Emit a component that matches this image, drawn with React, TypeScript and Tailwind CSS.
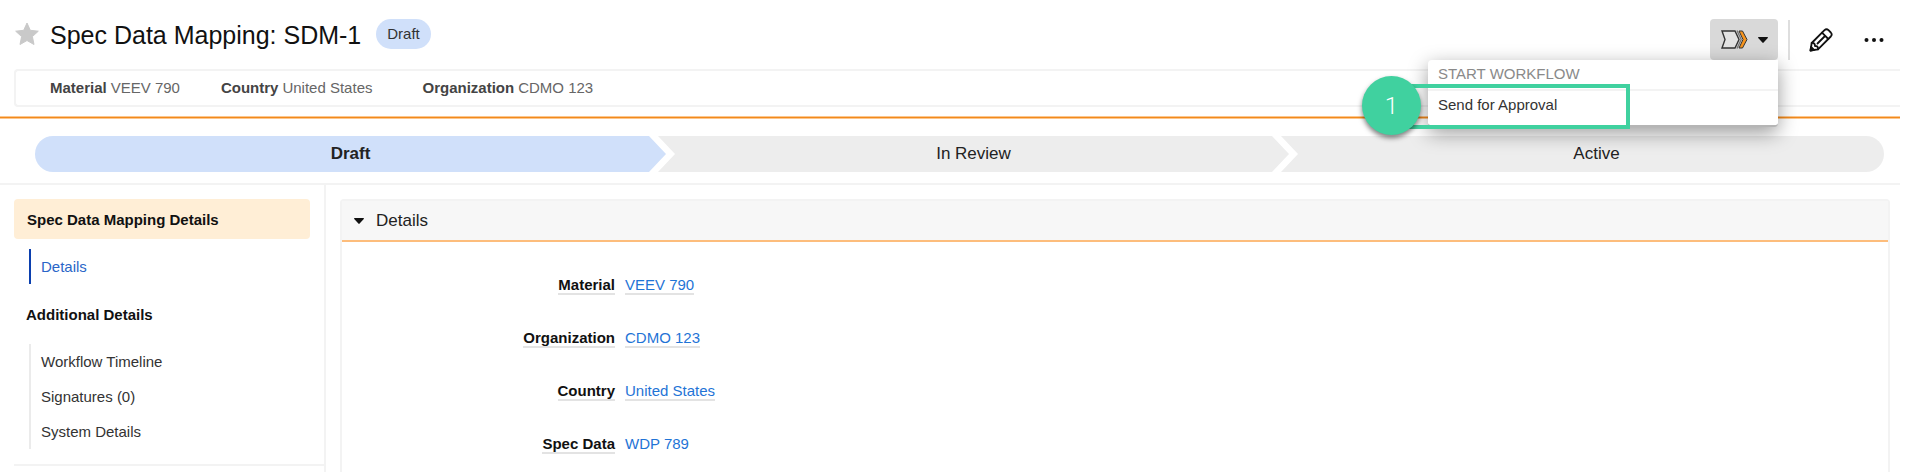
import React, { useState } from "react";
import { clsx } from "clsx";

const summary = [
  { label: "Material", value: "VEEV 790", className: "mr-[41px]" },
  { label: "Country", value: "United States", className: "mr-[50px]" },
  { label: "Organization", value: "CDMO 123", className: "" },
];

const stages = ["Draft", "In Review", "Active"];

const fields = [
  { label: "Material", value: "VEEV 790", underlined: true },
  { label: "Organization", value: "CDMO 123", underlined: true },
  { label: "Country", value: "United States", underlined: true },
  { label: "Spec Data", value: "WDP 789", underlined: false },
];

const additional = ["Workflow Timeline", "Signatures (0)", "System Details"];

const Caret = () => (
  <svg width="10" height="6" viewBox="0 0 10 6" fill="#111" aria-hidden="true">
    <path d="M0.6 0h8.8c.5 0 .7.5.4.9L5.6 5.6c-.3.4-.9.4-1.2 0L.2.9C-.1.5.1 0 .6 0z" />
  </svg>
);

const StarIcon = () => (
  <svg width="24" height="24" viewBox="0 0 24 24" fill="#c9c9c9" stroke="#c9c9c9" strokeWidth="1" strokeLinejoin="round" aria-hidden="true">
    <path d="M12 1l3.3 7.3 8 .9-5.9 5.4 1.6 7.9-7-4-7 4 1.6-7.9L.7 9.2l8-.9z" />
  </svg>
);

const WorkflowIcon = () => (
  <svg width="27" height="19" viewBox="0 0 27 19" fill="none" stroke="#333" strokeWidth="1.4" aria-hidden="true">
    <path d="M1 1h13l4 8.5-4 8.5H1l3-8.5z" fill="#e2e2e2" />
    <path d="M16 .5l4.200 9L16 18.500" stroke="#777" />
    <path d="M18 1h3.500l4.500 8.500-4.500 8.500H18l4-8.500z" fill="#f7941d" strokeWidth="1" />
  </svg>
);

const PencilIcon = () => (
  <svg width="24" height="24" viewBox="0 0 24 24" fill="none" stroke="#111" strokeWidth="1.8" strokeLinejoin="round" strokeLinecap="round" aria-hidden="true">
    <path d="M1.500 22.500l1.200-7.500L15.500 2.200q2-1.800 4 0l2.300 2.300q1.800 2 0 4L9 21.300z" />
    <path d="M2.700 15q3.300-.5 3.300 3 3.300-.2 3 3.300M13 4.700l6.300 6.300M8.500 15.500l7-7" />
    <path d="M1.500 22.500l.6-3.500 2.900 2.900z" fill="#111" />
  </svg>
);

const WorkflowMenu = () => (
  <div className="absolute top-full right-0 z-10 w-[350px] rounded-b rounded-tl border-b-2 border-[#b5b5b5] bg-white shadow-[0_6px_20px_rgba(0,0,0,0.4)]">
    <p className="border-b-2 border-[#f3f3f3] px-2.5 pt-[5px] pb-1.5 text-[15px] leading-[18px] text-[#8a8a8a]">START WORKFLOW</p>
    <button type="button" className="block w-full px-2.5 pt-[5px] pb-[11px] text-left text-[15px] leading-[18px] text-[#333]">
      Send for Approval
    </button>
    {/* step marker around the menu item */}
    <div className="pointer-events-none absolute top-6 -left-6 h-[45px] w-[226px] border-4 border-[#40d19f]" />
    <div className="absolute top-4 -left-[66px] flex size-[59px] items-center justify-center rounded-full bg-[#40d19f] font-[Roboto,sans-serif] text-2xl font-light text-white shadow-[0_3px_5px_rgba(0,0,0,0.5)]">
      1
    </div>
  </div>
);

const Header = () => {
  const [menuOpen, setMenuOpen] = useState(true);

  return (
    <header>
      <div className="flex h-[69px] items-start justify-between pt-[19px] pl-[15px]">
        <div className="flex h-[30px] items-center">
          <button type="button" aria-label="Favorite">
            <StarIcon />
          </button>
          <h1 className="ml-[11px] pt-0.5 text-[25px] leading-[30px] text-[#111]">Spec Data Mapping: SDM-1</h1>
          <span className="ml-[15px] rounded-full bg-[#d0e0fa] px-[11px] text-[15px] leading-[30px] text-[#333]">Draft</span>
        </div>
        <div className="flex h-[41px] items-center">
          <div className="relative">
            <button
              type="button"
              aria-label="Workflow actions"
              aria-expanded={menuOpen}
              onClick={() => setMenuOpen(!menuOpen)}
              className="flex h-[41px] w-[68px] items-center justify-center gap-2.5 rounded bg-[#d9d9d9]"
            >
              <WorkflowIcon />
              <Caret />
            </button>
            {menuOpen && <WorkflowMenu />}
          </div>
          <div className="ml-2.5 h-10 w-0.5 bg-[#dedede]" />
          <button type="button" aria-label="Edit" className="ml-[19px]">
            <PencilIcon />
          </button>
          <button type="button" aria-label="More actions" className="mr-4 ml-[31px]">
            <svg width="20" height="6" viewBox="0 0 20 6" fill="#111" aria-hidden="true">
              <circle cx="2.500" cy="3" r="2" />
              <circle cx="10" cy="3" r="2" />
              <circle cx="17.500" cy="3" r="2" />
            </svg>
          </button>
        </div>
      </div>
      <dl className="ml-3.5 flex rounded-l border-2 border-r-0 border-[#f3f3f3] py-2 pl-[34px] text-[15px] leading-[18px]">
        {summary.map((s) => (
          <div key={s.label} className={clsx("flex gap-1", s.className)}>
            <dt className="font-bold text-[#444]">{s.label}</dt>
            <dd className="text-[#666]">{s.value}</dd>
          </div>
        ))}
      </dl>
      <div className="mt-[9px] h-[3px] border-y border-[#fcc68d] bg-[#f28a1c]" />
    </header>
  );
};

const Lifecycle = () => (
  <div className="border-b-2 border-[#f3f3f3] pt-[17px] pr-4 pb-[11px] pl-[35px]">
    <div className="overflow-hidden rounded-full">
      <ol className="-mr-5 flex">
        {stages.map((stage, i) => (
          <li
            key={stage}
            className={clsx(
              "-mr-2 h-9 flex-1 text-center text-[17px] leading-9 text-[#222]",
              i === 0
                ? "bg-[#d0e0fa] font-bold [clip-path:polygon(0_0,calc(100%-17px)_0,100%_50%,calc(100%-17px)_100%,0_100%)]"
                : "bg-[#ededed] [clip-path:polygon(0_0,calc(100%-17px)_0,100%_50%,calc(100%-17px)_100%,0_100%,17px_50%)]"
            )}
          >
            {stage}
          </li>
        ))}
      </ol>
    </div>
  </div>
);

const Sidebar = () => (
  <nav className="w-[326px] shrink-0 border-r-2 border-[#f3f3f3] pt-3.5 pl-3.5 text-[15px]">
    <h2 className="mr-3.5 rounded-sm bg-[#ffeed6] pt-0.5 pl-[13px] leading-[38px] font-bold text-[#111]">Spec Data Mapping Details</h2>
    <ul className="mt-2.5 ml-[15px] border-l-2 border-[#0b3fae]">
      <li>
        <a href="#details" className="block pl-2.5 leading-[35px] text-[#2a66c8]">Details</a>
      </li>
    </ul>
    <h2 className="mt-2.5 pt-0.5 pl-3 leading-[38px] font-bold text-[#111]">Additional Details</h2>
    <ul className="mt-2.5 ml-[15px] border-l-2 border-[#ebebeb]">
      {additional.map((item) => (
        <li key={item}>
          <a href="#" className="block pl-2.5 leading-[35px] text-[#333]">{item}</a>
        </li>
      ))}
    </ul>
    <div className="mt-[15px] h-0.5 bg-[#f3f3f3]" />
  </nav>
);

const DetailsPanel = () => (
  <main className="min-w-0 flex-1 pt-3.5 pr-2.5 pl-3.5">
    <section id="details" className="h-full rounded-t border-2 border-b-0 border-[#f3f3f3]">
      <h2 className="border-b-2 border-[#fdbd7c] bg-[#f7f7f7]">
        <button type="button" className="flex w-full items-center gap-3 pl-3 text-[17px] leading-[39px] text-[#222]">
          <Caret />
          Details
        </button>
      </h2>
      <dl className="pt-[17px] text-[15px] leading-4">
        {fields.map((f) => (
          <div key={f.label} className="flex h-[53px] items-center gap-2.5">
            <dt className="w-[273px] text-right font-bold text-[#111]">
              <span className="inline-block border-b-2 border-[#e3e3e3]">{f.label}</span>
            </dt>
            <dd>
              <a
                href="#"
                className={clsx("inline-block border-b-2 text-[#1f74d6]", f.underlined ? "border-[#e3e3e3]" : "border-transparent")}
              >
                {f.value}
              </a>
            </dd>
          </div>
        ))}
      </dl>
    </section>
  </main>
);

export default function App() {
  return (
    <div className="flex min-h-screen flex-col bg-white pr-4 font-['Liberation_Sans',Arial,sans-serif]">
      <Header />
      <Lifecycle />
      <div className="flex flex-1">
        <Sidebar />
        <DetailsPanel />
      </div>
    </div>
  );
}
